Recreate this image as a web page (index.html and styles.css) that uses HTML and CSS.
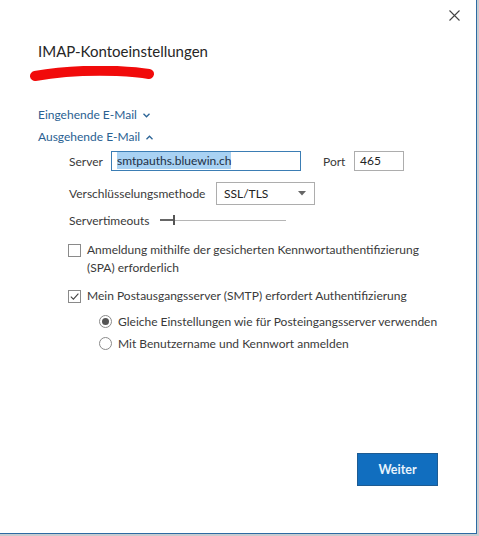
FILE: index.html
```html
<!DOCTYPE html>
<html lang="de">
<head>
<meta charset="utf-8">
<title>IMAP-Kontoeinstellungen</title>
<link rel="stylesheet" href="styles.css">
</head>
<body>
<div class="window">
  <div class="topbar">
    <button class="close" aria-label="Schließen">
      <svg width="11" height="11" viewBox="0 0 11 11"><path d="M0.5 0.5 L10.5 10.5 M10.5 0.5 L0.5 10.5" stroke="#444" stroke-width="1.1" fill="none"/></svg>
    </button>
  </div>
  <h1 class="title">IMAP-Kontoeinstellungen</h1>
  <svg class="scribble" width="132" height="18" viewBox="0 0 132 18"><path d="M8 10 C 30 6, 60 4, 90 5 C 108 6, 116 7, 122 8" stroke="#f10b0b" stroke-width="10" stroke-linecap="round" fill="none"/></svg>

  <div class="section-link link-1">Eingehende E-Mail <svg class="chev" width="7" height="5" viewBox="0 0 7 5"><path d="M0.5 0.8 L3.5 3.8 L6.5 0.8" stroke="#2b6496" stroke-width="1.3" fill="none"/></svg></div>
  <div class="section-link">Ausgehende E-Mail <svg class="chev" width="7" height="5" viewBox="0 0 7 5"><path d="M0.5 4.2 L3.5 1.2 L6.5 4.2" stroke="#2b6496" stroke-width="1.3" fill="none"/></svg></div>

  <div class="form">
    <div class="row row-server">
      <span class="label label-server">Server</span>
      <div class="input input-server"><span class="sel">smtpauths.bluewin.ch</span></div>
      <span class="label label-port">Port</span>
      <div class="input input-port">465</div>
    </div>
    <div class="row row-enc">
      <span class="label label-enc">Verschlüsselungsmethode</span>
      <div class="select">SSL/TLS<svg class="arrow" width="8" height="5" viewBox="0 0 8 5"><path d="M0 0 H8 L4 4.5 Z" fill="#666"/></svg></div>
    </div>
    <div class="row row-timeout">
      <span class="label label-timeout">Servertimeouts</span>
      <div class="slider"><span class="slider-fill"></span><span class="slider-thumb"></span><span class="slider-track"></span></div>
    </div>

    <div class="check">
      <span class="box"></span>
      <span class="check-text">Anmeldung mithilfe der gesicherten Kennwortauthentifizierung<br>(SPA) erforderlich</span>
    </div>
    <div class="check check-2">
      <span class="box"><svg width="11" height="11" viewBox="0 0 11 11"><path d="M1.8 5.6 L4.4 8.2 L9.4 2.6" stroke="#444" stroke-width="1.1" fill="none"/></svg></span>
      <span class="check-text">Mein Postausgangsserver (SMTP) erfordert Authentifizierung</span>
    </div>
    <div class="radios">
      <div class="radio"><span class="circle on"></span><span>Gleiche Einstellungen wie für Posteingangsserver verwenden</span></div>
      <div class="radio"><span class="circle"></span><span>Mit Benutzername und Kennwort anmelden</span></div>
    </div>
  </div>

  <div class="footer">
    <button class="primary">Weiter</button>
  </div>
</div>
</body>
</html>
```

FILE: styles.css
```css
* { box-sizing: border-box; }
html, body { margin: 0; padding: 0; }
body {
  background: #c9ccd0;
  font-family: "Lato", "Noto Sans", sans-serif;
  color: #3a3a3a;
  width: 479px;
  height: 536px;
  overflow: hidden;
}
.window {
  width: 477px;
  height: 534px;
  background: #fff;
  border-right: 1px solid #2d6aa3;
  border-bottom: 1px solid #2d6aa3;
  display: flex;
  flex-direction: column;
}
.topbar {
  height: 30px;
  display: flex;
  justify-content: flex-end;
  align-items: center;
  padding-right: 16px;
}
.close {
  border: 0;
  background: transparent;
  padding: 0;
  width: 11px;
  height: 11px;
  display: flex;
}
.title {
  margin: 11px 0 0 38px;
  font-size: 15px;
  line-height: 20px;
  font-weight: 400;
  color: #262626;
}
.scribble {
  display: block;
  margin: 5px 0 0 27px;
}
.section-link {
  margin: 6px 0 0 38px;
  font-size: 12px;
  line-height: 16px;
  color: #2a6192;
  display: flex;
  align-items: center;
  gap: 6px;
}
.section-link.link-1 { margin-top: 23px; }
.chev { display: block; margin-top: 1px; }

.form { padding-left: 69px; font-size: 12px; }
.row { display: flex; align-items: center; }
.label { color: #3a3a3a; flex: none; }
.label-server { width: 42px; }
.label-port { width: 31px; margin-left: 22px; }
.label-enc { width: 147px; }
.label-timeout { width: 91px; }
.row-server { margin-top: 6px; height: 20px; }
.input {
  height: 20px;
  border: 1px solid #adadad;
  padding: 0 5px;
  line-height: 18px;
  color: #222;
  background: #fff;
}
.input-server { width: 190px; border-color: #3b7db4; }
.sel { background: #a9d2f3; color: #1d2f45; padding: 1px 0; }
.input-port { width: 50px; }
.row-enc { margin-top: 11px; height: 22px; }
.select {
  width: 99px;
  height: 23px;
  border: 1px solid #adadad;
  padding: 0 8px 0 7px;
  display: flex;
  align-items: center;
  justify-content: space-between;
  color: #222;
}
.arrow { display: block; margin-top: 1px; }
.row-timeout { margin-top: 8px; height: 16px; }
.slider {
  width: 126px;
  height: 10px;
  display: flex;
  align-items: center;
}
.slider-fill { width: 13px; height: 2px; background: #666; }
.slider-thumb { width: 2px; height: 10px; background: #555; }
.slider-track { flex: 1; height: 1px; background: #b5b5b5; }

.check {
  display: flex;
  align-items: flex-start;
  gap: 6px;
  margin-top: 13px;
  margin-left: -1px;
  line-height: 18px;
}
.check-2 { margin-top: 10px; }
.box {
  width: 13px;
  height: 13px;
  border: 1px solid #8a8a8a;
  margin-top: 3px;
  flex: none;
  display: flex;
  align-items: center;
  justify-content: center;
}
.box svg { display: block; }
.radios { margin-left: 30px; margin-top: 5px; }
.radio {
  display: flex;
  align-items: center;
  gap: 6px;
  height: 22px;
}
.circle {
  width: 13px;
  height: 13px;
  border: 1px solid #8a8a8a;
  border-radius: 50%;
  flex: none;
  display: flex;
  align-items: center;
  justify-content: center;
}
.circle.on::after {
  content: "";
  width: 7px;
  height: 7px;
  border-radius: 50%;
  background: #555;
}
.footer {
  margin-top: auto;
  display: flex;
  justify-content: flex-end;
  padding: 0 38px 47px 0;
}
.primary {
  width: 81px;
  height: 33px;
  background: #116ebf;
  border: 1px solid #1d5b92;
  color: #e8f3fc;
  font-family: "Lato", "Noto Sans", sans-serif;
  font-size: 12.5px;
  font-weight: 700;
  padding: 0;
}
```
